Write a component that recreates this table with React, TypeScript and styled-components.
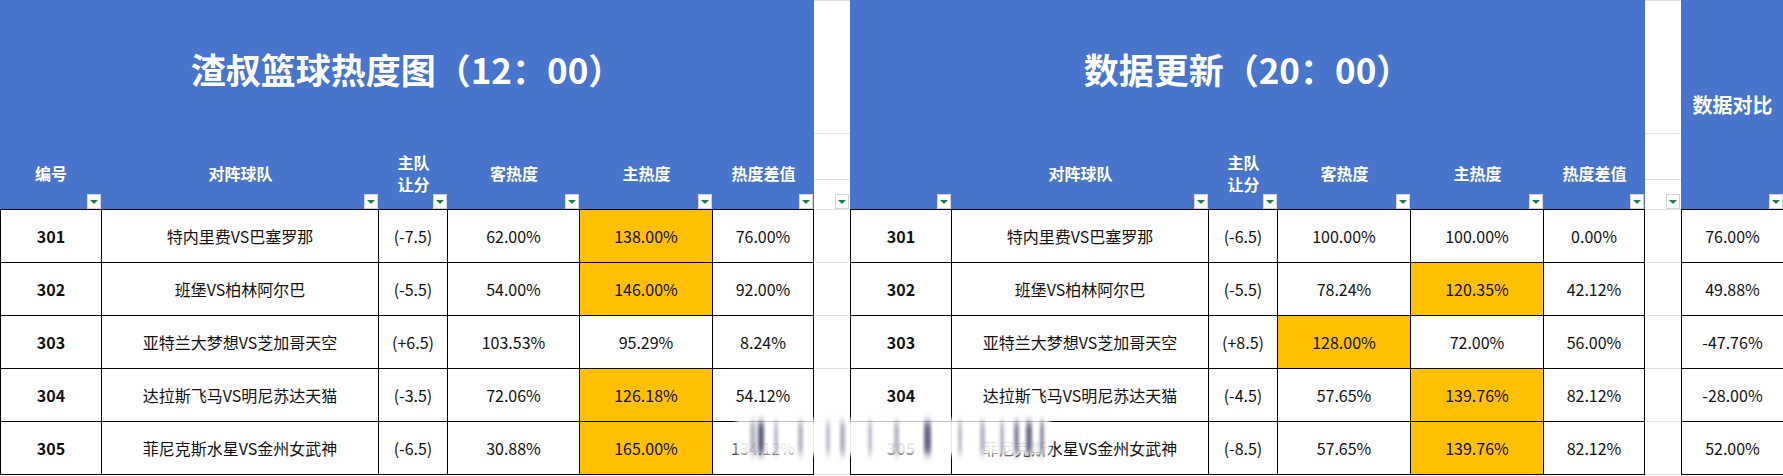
import React from "react";
import styled, { createGlobalStyle } from "styled-components";

const BLUE = "#4874CB";
const GOLD = "#FFC000";
const GRID = "#e1e1e1";
const FONT = `"Noto Sans CJK SC", "Microsoft YaHei", "Noto Sans", sans-serif`;

const GlobalStyle = createGlobalStyle`
  html, body { margin: 0; padding: 0; background: #fff; overflow: hidden; }
  body { font-family: ${FONT}; }
  *, *::before, *::after { box-sizing: border-box; }
`;

const Sheet = styled.div`
  position: relative;
  display: flex;
  align-items: flex-start;
  width: 1783px;
  height: 476px;
  overflow: hidden;
  background: #fff;
`;

const Panel = styled.div<{ $cols: string }>`
  display: grid;
  grid-template-columns: ${(p) => p.$cols};
  grid-template-rows: 136px 73px 54px 53px 53px 53px 53px;
  flex-shrink: 0;
`;

const Title = styled.div`
  grid-column: 1 / -1;
  background: ${BLUE};
  color: #fff;
  font-size: 35px;
  font-weight: 700;
  display: flex;
  align-items: center;
  justify-content: center;
  white-space: nowrap;
`;

const HeadCell = styled.div<{ $tall?: boolean; $big?: boolean }>`
  position: relative;
  background: ${BLUE};
  color: #fff;
  font-size: ${(p) => (p.$big ? "20px" : "16px")};
  font-weight: 700;
  line-height: 22px;
  display: flex;
  align-items: center;
  justify-content: center;
  text-align: center;
  white-space: pre-line;
  ${(p) => (p.$tall ? "grid-row: 1 / 3;" : "")}
`;

const Drop = styled.span`
  position: absolute;
  right: 1px;
  bottom: 0;
  width: 14px;
  height: 15px;
  background: #fff;
  border: 1px solid #d4d4d4;
  display: flex;
  align-items: center;
  justify-content: center;
  &::after {
    content: "";
    border-left: 4px solid transparent;
    border-right: 4px solid transparent;
    border-top: 4px solid #1b7f4c;
  }
`;

const Cell = styled.div<{ $hl?: boolean; $bold?: boolean; $first?: boolean; $top?: boolean }>`
  display: flex;
  align-items: center;
  justify-content: center;
  font-size: 16px;
  color: #111;
  white-space: nowrap;
  background: ${(p) => (p.$hl ? GOLD : "#fff")};
  font-weight: ${(p) => (p.$bold ? 700 : 400)};
  border-right: 1px solid #000;
  border-bottom: 1px solid #000;
  ${(p) => (p.$first ? "border-left: 1px solid #000;" : "")}
  ${(p) => (p.$top ? "border-top: 1px solid #000;" : "")}
`;

const Gap = styled.div`
  width: 36px;
  flex-shrink: 0;
  display: flex;
  flex-direction: column;
`;

const GapCell = styled.div<{ $h: number; $top?: boolean }>`
  position: relative;
  height: ${(p) => p.$h}px;
  border-bottom: 1px solid ${GRID};
  ${(p) => (p.$top ? `border-top: 1px solid ${GRID};` : "")}
`;

const Watermark = styled.svg`
  position: absolute;
  left: 728px;
  top: 410px;
  pointer-events: none;
`;

type Row = { id: string; teams: string; hc: string; away: string; home: string; diff: string; hl: "away" | "home" | null };

const left: Row[] = [
  { id: "301", teams: "特内里费VS巴塞罗那", hc: "(-7.5)", away: "62.00%", home: "138.00%", diff: "76.00%", hl: "home" },
  { id: "302", teams: "班堡VS柏林阿尔巴", hc: "(-5.5)", away: "54.00%", home: "146.00%", diff: "92.00%", hl: "home" },
  { id: "303", teams: "亚特兰大梦想VS芝加哥天空", hc: "(+6.5)", away: "103.53%", home: "95.29%", diff: "8.24%", hl: null },
  { id: "304", teams: "达拉斯飞马VS明尼苏达天猫", hc: "(-3.5)", away: "72.06%", home: "126.18%", diff: "54.12%", hl: "home" },
  { id: "305", teams: "菲尼克斯水星VS金州女武神", hc: "(-6.5)", away: "30.88%", home: "165.00%", diff: "134.12%", hl: "home" },
];

const right: Row[] = [
  { id: "301", teams: "特内里费VS巴塞罗那", hc: "(-6.5)", away: "100.00%", home: "100.00%", diff: "0.00%", hl: null },
  { id: "302", teams: "班堡VS柏林阿尔巴", hc: "(-5.5)", away: "78.24%", home: "120.35%", diff: "42.12%", hl: "home" },
  { id: "303", teams: "亚特兰大梦想VS芝加哥天空", hc: "(+8.5)", away: "128.00%", home: "72.00%", diff: "56.00%", hl: "away" },
  { id: "304", teams: "达拉斯飞马VS明尼苏达天猫", hc: "(-4.5)", away: "57.65%", home: "139.76%", diff: "82.12%", hl: "home" },
  { id: "305", teams: "菲尼克斯水星VS金州女武神", hc: "(-8.5)", away: "57.65%", home: "139.76%", diff: "82.12%", hl: "home" },
];

const compare = ["76.00%", "49.88%", "-47.76%", "-28.00%", "52.00%"];

// blurred streaks of the watermark: [x, width, opacity]
const streaks: [number, number, number][] = [
  [22, 6, 0.45], [30, 6, 1], [46, 4, 0.4], [70, 5, 0.45], [98, 4, 0.4], [112, 5, 0.5],
  [140, 4, 0.4], [166, 5, 0.45], [196, 7, 0.95], [230, 4, 0.4], [252, 5, 0.45], [272, 4, 0.45],
  [286, 5, 0.75], [298, 6, 0.9], [312, 4, 0.7],
];

const Heads = ({ labels }: { labels: string[] }) => (
  <>
    {labels.map((l, i) => (
      <HeadCell key={i}>
        {l}
        <Drop />
      </HeadCell>
    ))}
  </>
);

const Rows = ({ rows }: { rows: Row[] }) => (
  <>
    {rows.map((r, i) => (
      <React.Fragment key={r.id + i}>
        <Cell $first $top={i === 0} $bold>{r.id}</Cell>
        <Cell $top={i === 0}>{r.teams}</Cell>
        <Cell $top={i === 0}>{r.hc}</Cell>
        <Cell $top={i === 0} $hl={r.hl === "away"}>{r.away}</Cell>
        <Cell $top={i === 0} $hl={r.hl === "home"}>{r.home}</Cell>
        <Cell $top={i === 0}>{r.diff}</Cell>
      </React.Fragment>
    ))}
  </>
);

const GapColumn = () => (
  <Gap>
    <GapCell $h={134} $top />
    <GapCell $h={46} />
    <GapCell $h={30}>
      <Drop />
    </GapCell>
    {[0, 1, 2, 3, 4].map((i) => (
      <GapCell key={i} $h={53} />
    ))}
  </Gap>
);

const WatermarkArt = () => (
  <Watermark width="330" height="56" viewBox="0 0 330 56">
    <defs>
      <filter id="wmBlurBand" x="-10%" y="-40%" width="120%" height="180%">
        <feGaussianBlur stdDeviation="2.5" />
      </filter>
      <filter id="wmBlurStreak" x="-100%" y="-30%" width="300%" height="160%">
        <feGaussianBlur stdDeviation="1.4 4" />
      </filter>
    </defs>
    <rect x="8" y="9" width="314" height="36" fill="#fff" opacity="0.9" filter="url(#wmBlurBand)" />
    {streaks.map(([x, w, o], i) => (
      <rect key={i} x={x} y="12" width={w} height="32" fill="#1e1e4a" opacity={o * 0.7} filter="url(#wmBlurStreak)" />
    ))}
  </Watermark>
);

export default function App() {
  return (
    <>
      <GlobalStyle />
      <Sheet>
        <Panel $cols="102px 277px 69px 132px 133px 101px">
          <Title>渣叔篮球热度图（12：00）</Title>
          <Heads labels={["编号", "对阵球队", "主队\n让分", "客热度", "主热度", "热度差值"]} />
          <Rows rows={left} />
        </Panel>
        <GapColumn />
        <Panel $cols="102px 257px 69px 133px 133px 101px">
          <Title>数据更新（20：00）</Title>
          <Heads labels={["", "对阵球队", "主队\n让分", "客热度", "主热度", "热度差值"]} />
          <Rows rows={right} />
        </Panel>
        <GapColumn />
        <Panel $cols="103px">
          <HeadCell $tall $big>
            数据对比
            <Drop />
          </HeadCell>
          {compare.map((v, i) => (
            <Cell key={i} $first $top={i === 0}>{v}</Cell>
          ))}
        </Panel>
        <WatermarkArt />
      </Sheet>
    </>
  );
}
